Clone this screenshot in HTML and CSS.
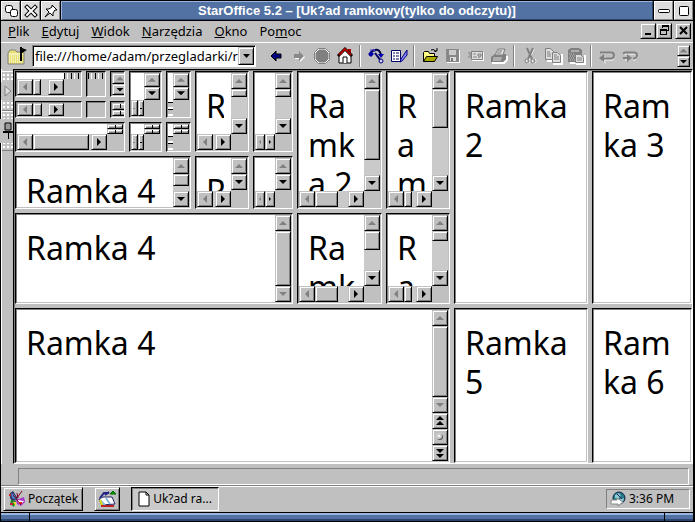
FILE: index.html
```html
<!DOCTYPE html>
<html lang="pl">
<head>
<meta charset="utf-8">
<meta name="viewport" content="width=device-width, initial-scale=1">
<title>StarOffice 5.2</title>
<link rel="stylesheet" href="styles.css">
</head>
<body>
<div class="window">
<header class="titlebar">
  <button class="wm" aria-label="Menu"><svg width="16" height="16" viewBox="0 0 16 16"><g fill="#fff" stroke="#000"><rect x="2.500" y="2.500" width="7" height="7" rx="2"/><rect x="7.500" y="6.500" width="7" height="7" rx="2"/></g></svg></button>
  <button class="wm" aria-label="Zamknij"><svg width="16" height="16" viewBox="0 0 16 16"><path d="M4 4l8 8M12 4l-8 8" stroke="#000" stroke-width="4" stroke-linecap="square"/><path d="M4 4l8 8M12 4l-8 8" stroke="#fff" stroke-width="2" stroke-linecap="square"/></svg></button>
  <button class="wm" aria-label="Przypnij"><svg width="16" height="16" viewBox="0 0 16 16"><path d="M9 2l5 5-2 0-2 3 0 3-3-3-5 4 4-5-3-3 3 0 3-2z" fill="#fff" stroke="#000"/></svg></button>
  <h1>StarOffice 5.2 – [Uk?ad ramkowy(tylko do odczytu)]</h1>
  <button class="wm" aria-label="Minimalizuj"><svg width="16" height="16" viewBox="0 0 16 16"><rect x="2.500" y="6.500" width="11" height="3" rx="1" fill="#fff" stroke="#000"/></svg></button>
  <button class="wm" aria-label="Maksymalizuj"><svg width="16" height="16" viewBox="0 0 16 16"><rect x="3.500" y="3.500" width="9" height="9" rx="1" fill="#fff" stroke="#000"/></svg></button>
</header>

<nav class="menubar">
  <button class="menu"><u>P</u>lik</button>
  <button class="menu"><u>E</u>dytuj</button>
  <button class="menu"><u>W</u>idok</button>
  <button class="menu"><u>N</u>arzędzia</button>
  <button class="menu"><u>O</u>kno</button>
  <button class="menu">Po<u>m</u>oc</button>
  <div class="mdi">
    <button class="raised" aria-label="Minimalizuj dokument"><svg width="11" height="11"><path d="M2 8h6v2h-6z"/></svg></button>
    <button class="raised" aria-label="Przywróć dokument"><svg width="11" height="11"><path d="M3 0h7v6h-2v-1h1v-3h-5v1h-1zM1 4h7v6h-7zM2 6v3h5v-3z" fill-rule="evenodd"/></svg></button>
    <button class="raised apart" aria-label="Zamknij dokument"><svg width="11" height="11"><path d="M2 2l7 7M9 2l-7 7" stroke="#000" stroke-width="2"/></svg></button>
  </div>
</nav>

<div class="toolbar">
  <button class="tool bookmark" aria-label="Adres"><svg width="20" height="20" viewBox="0 0 20 20"><path d="M1 7l2-3h5l2 2h7v12h-16z" fill="#e8e070" stroke="#808080"/><path d="M2 8h14" stroke="#fff"/><path d="M2 10h14M2 12h14M2 14h14M2 16h14" stroke="#fff" stroke-dasharray="1 1"/><path d="M13 15V1h2v1l5 2-5 3v8z"/></svg></button>
  <div class="combo">
    <input type="text" aria-label="Adres URL" value="file:///home/adam/przegladarki/ramki.html">
    <button class="raised" aria-label="Rozwiń"><svg width="9" height="6"><path d="M1 1h7l-3.500 4z"/></svg></button>
  </div>
  <div class="tools">
  <button class="tool" aria-label="Wstecz"><svg width="20" height="20" viewBox="0 0 20 20"><path d="M5 10l5-5v3h5v4h-5v3z" fill="#000080" stroke="#000"/></svg></button>
  <button class="tool" aria-label="Dalej"><svg width="20" height="20" viewBox="0 0 20 20"><path d="M16 11l-5-5v3h-5v4h5v3z" fill="#fff"/><path d="M15 10l-5-5v3h-5v4h5v3z" fill="#888"/></svg></button>
  <button class="tool" aria-label="Zatrzymaj"><svg width="20" height="20" viewBox="0 0 20 20"><path d="M7 3h6l4 4v6l-4 4h-6l-4-4v-6z" fill="#808080" stroke="#fff"/><path d="M6.500 2.500h7l4 4v7l-4 4h-7l-4-4v-7z" fill="none" stroke="#808080"/></svg></button>
  <button class="tool" aria-label="Strona główna"><svg width="20" height="20" viewBox="0 0 20 20"><path d="M13 3h3v6h-3z" fill="#a00"/><path d="M4 10l6-6 6 6v7h-12z" fill="#fff" stroke="#000"/><path d="M3 10l7-7 7 7" fill="none" stroke="#000" stroke-width="3"/><path d="M4 9l6-6 6 6" fill="none" stroke="#a00" stroke-width="2"/><path d="M8 17v-6h4v6" fill="#fff" stroke="#000"/></svg></button>
  <i class="sep"></i>
  <button class="tool" aria-label="Nawigator"><svg width="20" height="20" viewBox="0 0 20 20"><path d="M4 10q0-5 5-6t6 5" fill="none" stroke="#004" stroke-width="2"/><path d="M9 7l6 8" stroke="#006" stroke-width="2"/><path d="M2 8l3-3 3 3-3 3zM12 8h6l-3 4z" fill="#00a"/><circle cx="15" cy="15" r="2" fill="#ccf" stroke="#006"/><path d="M4 4h5M8 3l1 3" stroke="#44d"/></svg></button>
  <button class="tool" aria-label="Edytuj plik"><svg width="20" height="20" viewBox="0 0 20 20"><path d="M2.500 4.500h9v11h-9z" fill="#fff" stroke="#006"/><path d="M4 7h2M7 7h3M4 10h2M7 10h3M4 13h2M7 13h3" stroke="#006"/><path d="M18 4v5l-5 6-2 1 1-3z" fill="#88f" stroke="#000080"/></svg></button>
  <i class="sep"></i>
  <button class="tool" aria-label="Otwórz"><svg width="20" height="20" viewBox="0 0 20 20"><path d="M3.500 15.500v-9l1-1h4l1 2h5v3" fill="#ff8" stroke="#000"/><path d="M3.500 15.500l3-5h11l-3 5z" fill="#aa0" stroke="#000"/><path d="M11 4q3-2 5 2M14 5h3v-3" fill="none" stroke="#000"/></svg></button>
  <button class="tool" aria-label="Zapisz"><svg width="20" height="20" viewBox="0 0 20 20"><path d="M4 4h13v13h-13z" fill="#fff"/><path d="M3 3h13v13h-12l-1-1z" fill="#888"/><path d="M6 4h7v5h-7z" fill="#ccc"/><path d="M7 11h6v4h-6z" fill="#ddd"/><path d="M8 12h2v3h-2z" fill="#777"/></svg></button>
  <button class="tool" aria-label="Wyślij"><svg width="20" height="20" viewBox="0 0 20 20"><path d="M6.500 6.500h11v8h-11z" fill="#ccc" stroke="#fff"/><path d="M5.500 5.500h11v8h-11z" fill="#ddd" stroke="#808080"/><path d="M2 7h3M3 9h3M2 11h3M7 11h4M7 8h3M12 8h3v2h-3zM12 12l3-2" fill="none" stroke="#808080"/></svg></button>
  <button class="tool" aria-label="Drukuj"><svg width="20" height="20" viewBox="0 0 20 20"><path d="M3 17h12l3-3v-4" fill="none" stroke="#fff" stroke-width="2"/><path d="M2 11l4-3h11v5l-3 3h-12z" fill="#808080"/><path d="M6 9l3-6h7l-2 6z" fill="#ddd" stroke="#808080"/><path d="M9 5h4M8 7h4" stroke="#808080"/><path d="M4 12h9M4 14h8" stroke="#ddd"/></svg></button>
  <i class="sep"></i>
  <button class="tool" aria-label="Wytnij"><svg width="20" height="20" viewBox="0 0 20 20"><g fill="none" stroke="#fff"><path d="M8 3l4 10M14 3l-5 10"/><circle cx="8" cy="15" r="2"/><circle cx="14" cy="15" r="2"/></g><g fill="none" stroke="#808080"><path d="M7 2l5 11M13 2l-5 11" stroke-width="2"/><circle cx="7" cy="15" r="2"/><circle cx="13" cy="15" r="2"/></g></svg></button>
  <button class="tool" aria-label="Kopiuj"><svg width="20" height="20" viewBox="0 0 20 20"><path d="M4 15h6M10 18h9v-10" fill="none" stroke="#fff" stroke-width="2"/><g fill="#ddd" stroke="#808080"><path d="M2.500 2.500h5l3 3v8h-8z"/><path d="M9.500 6.500h5l3 3v7h-8z"/><path d="M4 6h3M4 8h4M4 10h4M11 9h3M11 11h5M11 13h5"/></g></svg></button>
  <button class="tool" aria-label="Wklej"><svg width="20" height="20" viewBox="0 0 20 20"><path d="M4 17h6M10 18h9v-9" fill="none" stroke="#fff" stroke-width="2"/><path d="M2 4l3-2h8l3 2v12h-14z" fill="#808080"/><path d="M5 5h8" stroke="#ddd"/><path d="M3 8h6M4 10h5M3 12h6M4 14h5" stroke="#bbb" stroke-dasharray="1 1"/><path d="M9.500 8.500h5l3 3v5h-8z" fill="#ddd" stroke="#808080"/><path d="M11 12h5M11 14h5" stroke="#808080"/></svg></button>
  <i class="sep"></i>
  <button class="tool" aria-label="Cofnij"><svg width="20" height="20" viewBox="0 0 20 20"><g fill="none" stroke="#fff"><path d="M4 7h11l3 3-2 4h-10M9 11l-4 3 4 3"/></g><path d="M3 6.500h11q3 0 3 3t-3 3h-9" fill="none" stroke="#808080" stroke-width="2"/><path d="M2 12l5-4v8z" fill="#808080"/></svg></button>
  <button class="tool" aria-label="Ponów"><svg width="20" height="20" viewBox="0 0 20 20"><path d="M4 8h11l3 3-3 3h-2M5 14h5" fill="none" stroke="#fff"/><path d="M3 7.500l2-1h9q3 0 3 3t-4 3M3 12h5" fill="none" stroke="#808080" stroke-width="2"/><path d="M7 8l5 4-5 4z" fill="#808080"/></svg></button>
  </div>
  <div class="spin"><button class="arrow up off" aria-label="Poprzednie"></button><button class="arrow down" aria-label="Następne"></button></div>
</div>

<main class="workspace">
  <aside class="dock">
    <button class="grip" aria-label="Pokaż"><svg width="8" height="12"><path d="M1 1l6 5-6 5z" fill="#ddd" stroke="#808080"/></svg></button>
    <button class="grip" aria-label="Przypnij panel"><svg width="10" height="18"><path d="M2 1h6v7h-6z" fill="#999" stroke="#000"/><path d="M0 9h10v2h-10zM5 11h1v6h-1z"/></svg></button>
  </aside>

  <div class="frames f1">
    <div class="frames f2">
      <div class="frames f3">
        <div class="frames f4">
          <div class="frames f5">
            <section class="frame both">
              <div class="doc"></div>
              <div class="ticks"></div>
              <div class="bar h"><button class="arrow left off" aria-label="W lewo"></button><div class="track"><div class="thumb" style="width:55%"></div></div><button class="arrow right" aria-label="W prawo"></button></div>
            </section>
            <section class="frame"><div class="ticks"></div></section>
            <section class="frame vert"><div class="bar v"><button class="arrow up off" aria-label="W górę"></button><button class="arrow down" aria-label="W dół"></button></div></section>
            <section class="frame both low">
              <div class="bar h"><button class="arrow left off" aria-label="W lewo"></button><div class="track"><div class="thumb" style="width:60%"></div></div><button class="arrow right" aria-label="W prawo"></button></div>
            </section>
            <section class="frame"></section>
            <section class="frame vert"><div class="bar v flat"><button class="arrow up off" aria-label="W górę"></button><button class="arrow down" aria-label="W dół"></button></div></section>
          </div>
          <section class="frame both">
            <div class="doc"></div>
            <div class="bar v"><button class="arrow up off" aria-label="W górę"></button><button class="arrow down" aria-label="W dół"></button></div>
            <div class="bar h slim"><button class="arrow left off" aria-label="W lewo"></button><button class="arrow right" aria-label="W prawo"></button></div>
          </section>
          <section class="frame both">
            <div class="doc"></div>
            <div class="bar v"><button class="arrow up off" aria-label="W górę"></button><button class="arrow down" aria-label="W dół"></button></div>
            <div class="dashes"></div>
          </section>
          <section class="frame both">
            <div class="doc"></div>
            <div class="bar v flat"><button class="arrow up off" aria-label="W górę"></button><button class="arrow down" aria-label="W dół"></button></div>
            <div class="bar h"><button class="arrow left off" aria-label="W lewo"></button><div class="track"><div class="thumb" style="width:97%"></div></div><button class="arrow right" aria-label="W prawo"></button></div>
          </section>
          <section class="frame both">
            <div class="doc"></div>
            <div class="bar v flat"><button class="arrow up off" aria-label="W górę"></button><button class="arrow down" aria-label="W dół"></button></div>
            <div class="bar h slim"><button class="arrow left off" aria-label="W lewo"></button><button class="arrow right" aria-label="W prawo"></button></div>
          </section>
          <section class="frame both">
            <div class="doc"></div>
            <div class="bar v flat"><button class="arrow up off" aria-label="W górę"></button><button class="arrow down" aria-label="W dół"></button></div>
            <div class="dashes"></div>
          </section>
        </div>
        <section class="frame both">
          <div class="doc"><p>R</p></div>
          <div class="bar v"><button class="arrow up off" aria-label="W górę"></button><div class="track"><div class="thumb" style="height:28%"></div></div><button class="arrow down" aria-label="W dół"></button></div>
          <div class="bar h"><button class="arrow left off" aria-label="W lewo"></button><div class="track"></div><button class="arrow right" aria-label="W prawo"></button></div>
        </section>
        <section class="frame both">
          <div class="doc"></div>
          <div class="bar v"><button class="arrow up off" aria-label="W górę"></button><div class="track"><div class="thumb" style="height:28%"></div></div><button class="arrow down" aria-label="W dół"></button></div>
          <div class="bar h narrow"><button class="arrow left off" aria-label="W lewo"></button><button class="arrow right" aria-label="W prawo"></button></div>
        </section>
        <section class="frame vert">
          <div class="doc"><p>Ramka 4</p></div>
          <div class="bar v"><button class="arrow up off" aria-label="W górę"></button><div class="track"><div class="thumb" style="height:73%"></div></div><button class="arrow down" aria-label="W dół"></button></div>
        </section>
        <section class="frame both">
          <div class="doc"><p>R</p></div>
          <div class="bar v"><button class="arrow up off" aria-label="W górę"></button><button class="arrow down" aria-label="W dół"></button></div>
          <div class="bar h"><button class="arrow left off" aria-label="W lewo"></button><div class="track"></div><button class="arrow right" aria-label="W prawo"></button></div>
        </section>
        <section class="frame both">
          <div class="doc"></div>
          <div class="bar v"><button class="arrow up off" aria-label="W górę"></button><button class="arrow down" aria-label="W dół"></button></div>
          <div class="bar h narrow"><button class="arrow left off" aria-label="W lewo"></button><button class="arrow right" aria-label="W prawo"></button></div>
        </section>
      </div>
      <section class="frame both">
        <div class="doc"><p>Ramka 2</p></div>
        <div class="bar v"><button class="arrow up off" aria-label="W górę"></button><div class="track"><div class="thumb" style="height:83%"></div></div><button class="arrow down" aria-label="W dół"></button></div>
        <div class="bar h"><button class="arrow left off" aria-label="W lewo"></button><div class="track"><div class="thumb" style="width:70%"></div></div><button class="arrow right" aria-label="W prawo"></button></div>
      </section>
      <section class="frame both">
        <div class="doc"><p>Ram</p></div>
        <div class="bar v"><button class="arrow up off" aria-label="W górę"></button><div class="track"><div class="thumb" style="height:45%"></div></div><button class="arrow down" aria-label="W dół"></button></div>
        <div class="bar h"><button class="arrow left off" aria-label="W lewo"></button><div class="track"><div class="thumb" style="width:65%"></div></div><button class="arrow right" aria-label="W prawo"></button></div>
      </section>
      <section class="frame vert">
        <div class="doc"><p>Ramka 4</p></div>
        <div class="bar v"><button class="arrow up off" aria-label="W górę"></button><div class="track"><div class="thumb" style="height:100%"></div></div><button class="arrow down off" aria-label="W dół"></button></div>
      </section>
      <section class="frame both">
        <div class="doc"><p>Ramk</p></div>
        <div class="bar v"><button class="arrow up off" aria-label="W górę"></button><div class="track"><div class="thumb" style="height:49%"></div></div><button class="arrow down" aria-label="W dół"></button></div>
        <div class="bar h"><button class="arrow left off" aria-label="W lewo"></button><div class="track"><div class="thumb" style="width:70%"></div></div><button class="arrow right" aria-label="W prawo"></button></div>
      </section>
      <section class="frame both">
        <div class="doc"><p>Ra</p></div>
        <div class="bar v"><button class="arrow up off" aria-label="W górę"></button><div class="track"><div class="thumb" style="height:26%"></div></div><button class="arrow down" aria-label="W dół"></button></div>
        <div class="bar h"><button class="arrow left off" aria-label="W lewo"></button><div class="track"><div class="thumb" style="width:65%"></div></div><button class="arrow right" aria-label="W prawo"></button></div>
      </section>
    </div>
    <section class="frame"><div class="doc"><p>Ramka 2</p></div></section>
    <section class="frame"><div class="doc"><p>Ramka 3</p></div></section>
    <section class="frame vert">
      <div class="doc"><p>Ramka 4</p></div>
      <div class="bar v">
        <button class="arrow up off" aria-label="W górę"></button><div class="track"><div class="thumb" style="height:100%"></div></div><button class="arrow down off" aria-label="W dół"></button>
        <button class="arrow" aria-label="Poprzednia strona"><svg width="8" height="10"><path d="M4 0l4 4h-8zM4 5l4 4h-8z"/></svg></button>
        <button class="arrow" aria-label="Nawigacja"><svg width="8" height="8"><circle cx="4" cy="4" r="3" fill="#555"/><circle cx="3" cy="3" r="3" fill="#ccc"/><circle cx="3" cy="3" r="1" fill="#fff"/></svg></button>
        <button class="arrow" aria-label="Następna strona"><svg width="8" height="10"><path d="M0 1h8l-4 4zM0 6h8l-4 4z"/></svg></button>
      </div>
    </section>
    <section class="frame"><div class="doc"><p>Ramka 5</p></div></section>
    <section class="frame"><div class="doc"><p>Ramka 6</p></div></section>
  </div>
</main>

<div class="status"></div>

<footer class="taskbar">
  <button class="raised start"><svg width="18" height="18" viewBox="0 0 18 18"><path d="M2 3l3-2 4 6 1 3-6 1-2-3z" fill="#336"/><path d="M3 3l4 2 1 5-4-2z" fill="#48c"/><path d="M8 10l8-3 1 5-4 4-4-2z" fill="#a3c"/><path d="M9 10l7 1-4 4z" fill="#fff"/><path d="M3 10l5 1-2 6-4-3z" fill="#283"/><path d="M5 12l3 0 0 4z" fill="#fd2"/><path d="M5 5l8 10M14 1l-5 7M9 3l1 5" stroke="#802" stroke-width="1"/><path d="M1 5h2M2 14h3M11 13h3" stroke="#c22" stroke-width="2"/></svg>Początek</button>
  <button class="raised desk" aria-label="Pulpit"><svg width="20" height="18" viewBox="0 0 20 18"><path d="M3 8l4-5 5 0M8 5l4-3" fill="none" stroke="#228" stroke-width="2"/><path d="M13 4l3-3 3 3z" fill="#0a0" stroke="#060"/><path d="M2 9l4-2 9 0 3 7-13 1z" fill="#fff" stroke="#226"/><path d="M3 10l5 5M9 8l4 6" stroke="#8bd" stroke-width="2"/><path d="M3 10l2 5" stroke="#dd0" stroke-width="2"/><path d="M4 16h13" stroke="#b22" stroke-width="2"/></svg></button>
  <button class="task"><svg width="12" height="16" viewBox="0 0 12 16"><path d="M1 1h7l3 3v11h-10z" fill="#fff" stroke="#000"/><path d="M8 1v3h3" fill="none" stroke="#000"/></svg>Uk?ad ra...</button>
  <div class="clock"><svg width="16" height="16" viewBox="0 0 16 16"><circle cx="9" cy="7" r="6" fill="#278" stroke="#124"/><path d="M5 4l4-2 2 3-3 3-3-1zM10 8l4-1-1 4-3 1z" fill="#8cc"/><path d="M7 3l5 5" stroke="#316"/><path d="M1 9h6v-2l6 4-5 4v-2h-7z" fill="#fff" stroke="#888"/></svg><time>3:36 PM</time></div>
</footer>
<div class="sill"></div>
</div>
</body>
</html>
```
FILE: styles.css
```css
* { box-sizing: border-box; }
body {
  margin: 0;
  font: 13px/16px "Noto Sans", "Open Sans", sans-serif;
  color: #000;
}
button {
  margin: 0;
  padding: 0;
  border: 0;
  background: none;
  font: inherit;
  color: inherit;
}
svg { display: block; flex: none; }
.window {
  display: flex;
  flex-direction: column;
  height: 100vh;
  background: #c0c0c0;
  border: 1px solid #000;
  border-right-width: 2px;
}

/* Window manager title bar */
.titlebar { display: flex; flex: none; height: 20px; border-bottom: 1px solid #000; }
.titlebar h1 {
  flex: 1;
  min-width: 0;
  margin: 0;
  border: 1px solid;
  border-color: #9ab4e0 #2c4470 #2c4470 #9ab4e0;
  background: #5272a4;
  color: #fff;
  font: bold 13px/17px "Liberation Sans", Arial, sans-serif;
  text-align: center;
  white-space: nowrap;
  overflow: hidden;
}
.wm {
  width: 19px;
  display: grid;
  place-items: center;
  background: #dcdcdc;
  border: 1px solid;
  border-color: #fff #888 #888 #fff;
  box-shadow: 1px 0 #000;
  margin-right: 1px;
}
.wm:last-child { margin-right: 0; }
h1 + .wm { margin-left: 1px; box-shadow: 1px 0 #000, -1px 0 #000; }

.raised, .arrow {
  border: 1px solid;
  border-color: #c0c0c0 #000 #000 #c0c0c0;
  background: #c0c0c0;
  box-shadow: inset 1px 1px #fff, inset -1px -1px #808080;
}

/* Menu bar */
.menubar {
  display: flex;
  flex: none;
  align-items: center;
  gap: 12px;
  height: 21px;
  padding: 0 2px 2px 7px;
}
.mdi { display: flex; margin-left: auto; }
.mdi .raised { width: 16px; height: 16px; display: grid; place-items: center; }
.mdi .apart { margin-left: 3px; }

/* Toolbar */
.toolbar {
  display: flex;
  flex: none;
  align-items: center;
  height: 27px;
  padding: 0 3px 0 6px;
  border-top: 1px solid #fff;
}
.combo {
  display: flex;
  flex: 0 1 224px;
  min-width: 0;
  height: 22px;
  border: 1px solid;
  border-color: #808080 #fff #fff #808080;
  box-shadow: inset 1px 1px #000;
  background: #fff;
  padding: 1px;
}
.combo input {
  flex: 1;
  min-width: 0;
  border: 0;
  padding: 0 0 0 1px;
  background: none;
  font: 13px/18px "Noto Sans", "Open Sans", sans-serif;
  outline: 0;
}
.combo .raised { width: 16px; display: grid; place-items: center; }
.tool { width: 23px; height: 22px; display: grid; place-items: center; }
.bookmark { width: 25px; justify-items: start; }
.tools { display: flex; margin-left: 8px; }
.sep { width: 2px; margin: 0 3px; border-left: 1px solid #808080; border-right: 1px solid #fff; }
.spin { display: flex; flex-direction: column; width: 13px; height: 22px; margin-left: auto; }
.spin .arrow { height: 11px; }

/* Dock strip and frames */
.workspace { flex: 1; display: flex; min-height: 0; }
.dock { width: 12px; border-left: 1px solid #fff; padding-top: 2px; flex: none; }
.grip {
  display: grid;
  place-items: center;
  width: 11px;
  height: 40px;
  border-bottom: 1px solid #808080;
  border-top: 1px solid #fff;
  background: radial-gradient(circle at 1px 1px, #fff 1px, #a0a0a0 2px, transparent 2px) 1px 2px / 4px 4px;
}
.grip svg { background: #c0c0c0; box-shadow: 0 0 0 3px #c0c0c0; }
.frames { display: grid; gap: 4px; min-width: 0; min-height: 0; }
.f1 {
  flex: 1;
  border: 1px solid #000;
  border-right-color: #fff;
  border-bottom-color: #fff;
  padding: 1px 0 0 1px;
  box-shadow: inset 1px 1px #808080;
  grid-template: 233fr 155fr / 435fr 134fr 100fr;
}
.f2 { grid-template: 138fr 91fr / 278fr 85fr 64fr; }
.f3 { grid-template: 81fr 53fr / 176fr 54fr 40fr; }
.f4 { grid-template: 47fr 30fr / 110fr 33fr 25fr; }
.f5 { grid-template: 26fr 17fr / 67fr 20fr 15fr; }
.frame {
  display: grid;
  grid-template: minmax(0, 1fr) / minmax(0, 1fr);
  min-width: 0;
  min-height: 0;
  overflow: hidden;
  padding: 1px;
  border: 1px solid;
  border-color: #000 #fff #fff #000;
  box-shadow: inset 1px 1px #808080;
}
.frame.vert { grid-template-columns: minmax(0, 1fr) 16px; }
.frame.both { grid-template: minmax(0, 1fr) 16px / minmax(0, 1fr) 16px; }
.frame.low { grid-template-rows: 0 minmax(0, 1fr); }
.doc { background: #fff; overflow: hidden; padding: 13px 7px 0 9px; min-width: 0; min-height: 0; }
.doc:empty { padding: 0; }
.doc p {
  margin: 0;
  font-size: 32px;
  line-height: 39px;
  overflow: hidden;
  overflow-wrap: anywhere;
}

/* Scroll bars */
.bar { display: flex; min-width: 0; min-height: 0; }
.v { flex-direction: column; grid-column: -2; grid-row: 1; }
.h { grid-column: 1; grid-row: 2; }
.track { flex: 1 1 0; min-width: 0; min-height: 0; background: #cacaca; }
.thumb {
  width: 100%;
  height: 100%;
  border: 1px solid;
  border-color: #c0c0c0 #000 #000 #c0c0c0;
  background: #c0c0c0;
  box-shadow: inset 1px 1px #fff, inset -1px -1px #808080;
}
.arrow {
  flex: 0 1 16px;
  min-width: 0;
  min-height: 0;
  display: flex;
  align-items: center;
  justify-content: center;
  overflow: hidden;
}
.up::after, .down::after, .left::after, .right::after {
  content: "";
  flex: none;
  width: 8px;
  height: 4px;
  background: #000;
  clip-path: polygon(50% 0, 100% 100%, 0 100%);
}
.down::after { clip-path: polygon(0 0, 100% 0, 50% 100%); }
.left::after, .right::after { width: 4px; height: 8px; }
.left::after { clip-path: polygon(100% 0, 100% 100%, 0 50%); }
.right::after { clip-path: polygon(0 0, 100% 50%, 0 100%); }
.off::after { background: #808080; }
.narrow .arrow::after { width: 2px; height: 4px; }
.slim .arrow::after { width: 2px; height: 1px; clip-path: none; }
.flat .arrow::after { width: 1px; height: 4px; clip-path: none; background: #000; }
.ticks {
  height: 6px;
  background: repeating-linear-gradient(90deg, #000 0 1px, #c0c0c0 1px 3px, #fff 3px 4px, #c0c0c0 4px 7px);
}
.dashes { width: 5px; background: repeating-linear-gradient(#fff 0 2px, #000 2px 3px, #c0c0c0 3px 7px); }

/* Status line and task bar */
.status { flex: none; height: 17px; margin: 4px 4px 0 17px; border: 1px solid; border-color: #808080 #fff #fff #808080; }
.taskbar {
  display: flex;
  flex: none;
  align-items: center;
  height: 27px;
  padding: 0 3px 0 2px;
  border-top: 1px solid #808080;
  box-shadow: inset 0 1px #fff;
  font-size: 12px;
}
.start, .desk, .task { display: flex; align-items: center; justify-content: center; height: 24px; }
.start { width: 80px; gap: 2px; }
.desk { width: 26px; margin-left: 11px; }
.task {
  width: 88px;
  gap: 3px;
  margin-left: 11px;
  background: #cacaca;
  border: 1px solid;
  border-color: #000 #fff #fff #000;
  box-shadow: inset 1px 1px #808080;
}
.clock {
  display: flex;
  align-items: center;
  gap: 3px;
  width: 84px;
  height: 20px;
  margin-left: auto;
  padding-left: 3px;
  border: 1px solid;
  border-color: #808080 #fff #fff #808080;
}
.sill {
  flex: none;
  height: 9px;
  border-top: 1px solid #000;
  background:
    linear-gradient(#000, #000) 28px 0 / 1px 100% no-repeat,
    linear-gradient(#000, #000) calc(100% - 28px) 0 / 1px 100% no-repeat,
    linear-gradient(#9ab4e0 0 2px, #5272a4 2px 6px, #2c4470 6px);
}
```
